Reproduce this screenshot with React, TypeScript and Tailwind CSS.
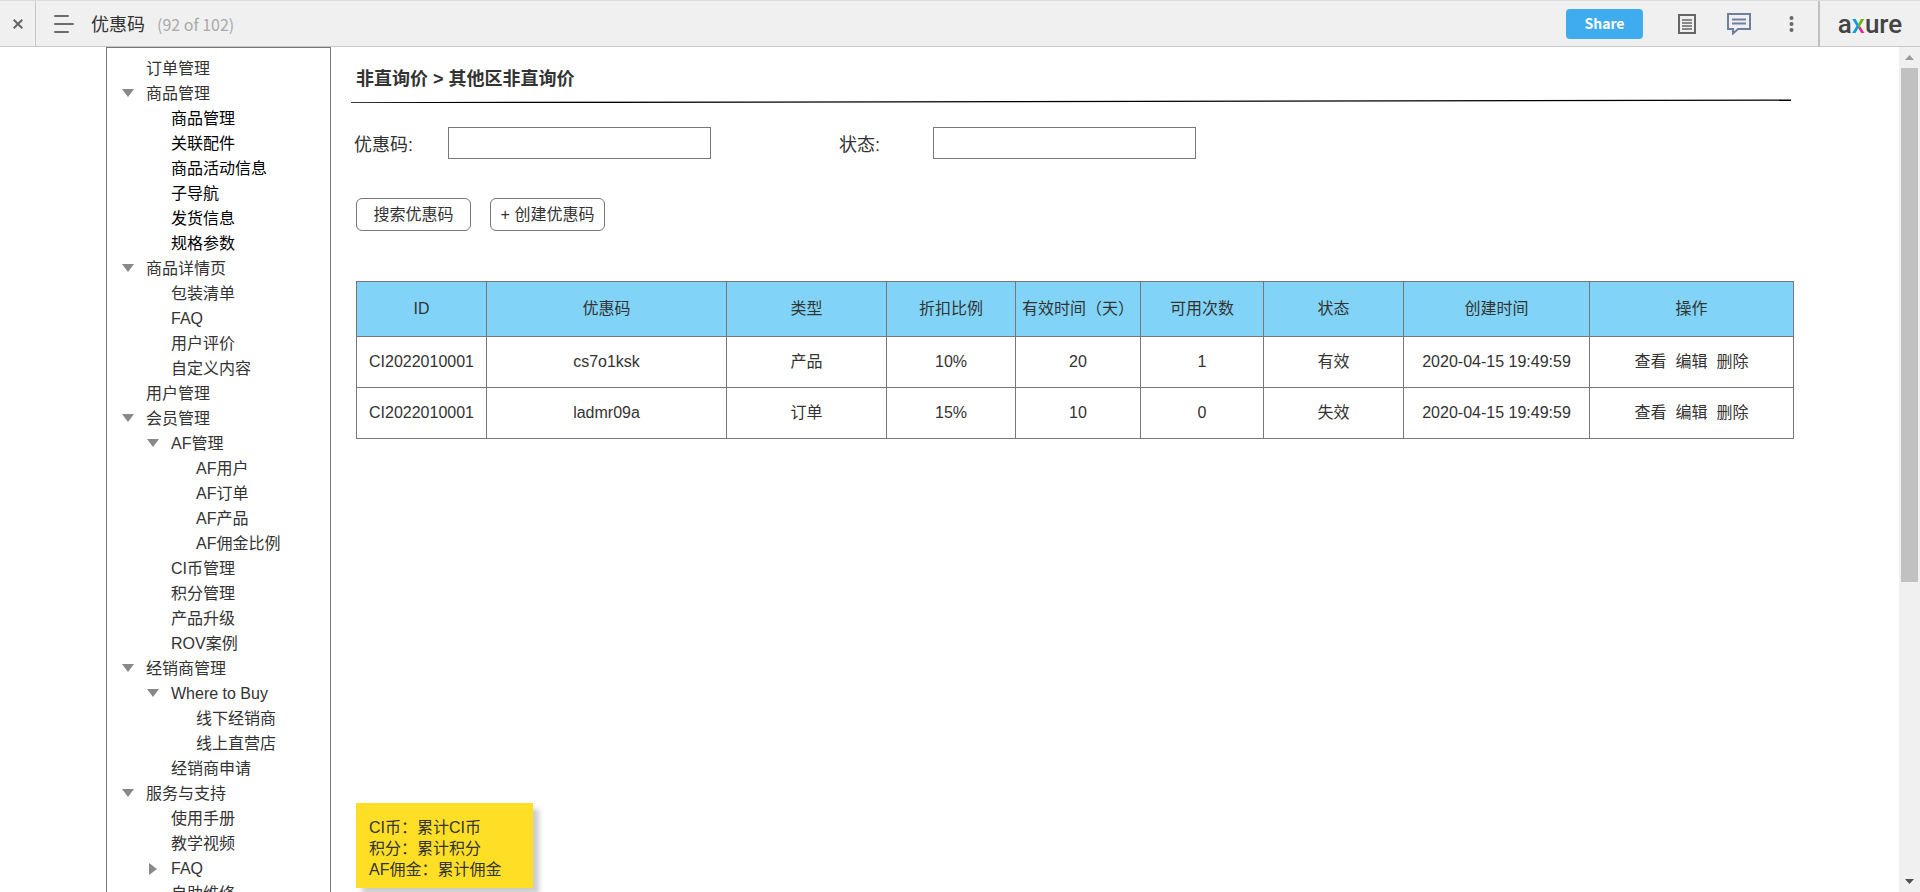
import { useState } from "react";

type MenuItem = {
  label: string;
  level: 0 | 1 | 2;
  arrow?: "down" | "right";
  dark?: boolean;
};

const menu: MenuItem[] = [
  { label: "订单管理", level: 0 },
  { label: "商品管理", level: 0, arrow: "down" },
  { label: "商品管理", level: 1, dark: true },
  { label: "关联配件", level: 1, dark: true },
  { label: "商品活动信息", level: 1, dark: true },
  { label: "子导航", level: 1, dark: true },
  { label: "发货信息", level: 1, dark: true },
  { label: "规格参数", level: 1, dark: true },
  { label: "商品详情页", level: 0, arrow: "down" },
  { label: "包装清单", level: 1 },
  { label: "FAQ", level: 1 },
  { label: "用户评价", level: 1 },
  { label: "自定义内容", level: 1 },
  { label: "用户管理", level: 0 },
  { label: "会员管理", level: 0, arrow: "down" },
  { label: "AF管理", level: 1, arrow: "down" },
  { label: "AF用户", level: 2 },
  { label: "AF订单", level: 2 },
  { label: "AF产品", level: 2 },
  { label: "AF佣金比例", level: 2 },
  { label: "CI币管理", level: 1 },
  { label: "积分管理", level: 1 },
  { label: "产品升级", level: 1 },
  { label: "ROV案例", level: 1 },
  { label: "经销商管理", level: 0, arrow: "down" },
  { label: "Where to Buy", level: 1, arrow: "down" },
  { label: "线下经销商", level: 2 },
  { label: "线上直营店", level: 2 },
  { label: "经销商申请", level: 1 },
  { label: "服务与支持", level: 0, arrow: "down" },
  { label: "使用手册", level: 1 },
  { label: "教学视频", level: 1 },
  { label: "FAQ", level: 1, arrow: "right" },
  { label: "自助维修", level: 1 },
];

const indent = ["pl-[15px]", "pl-10", "pl-[65px]"];

const columns = [
  { title: "ID", width: "w-[130px]" },
  { title: "优惠码", width: "w-[240px]" },
  { title: "类型", width: "w-[160px]" },
  { title: "折扣比例", width: "w-[129px]" },
  { title: "有效时间（天）", width: "w-[125px]" },
  { title: "可用次数", width: "w-[123px]" },
  { title: "状态", width: "w-[140px]" },
  { title: "创建时间", width: "w-[186px]" },
  { title: "操作", width: "w-[204px]" },
];

const rows = [
  ["CI2022010001", "cs7o1ksk", "产品", "10%", "20", "1", "有效", "2020-04-15 19:49:59"],
  ["CI2022010001", "ladmr09a", "订单", "15%", "10", "0", "失效", "2020-04-15 19:49:59"],
];

function Header() {
  return (
    <header className="flex h-[47px] shrink-0 items-stretch border-t border-b border-t-[#dcdcdc] border-b-[#c8c8c8] bg-[#f0f0f0] font-['Noto_Sans_CJK_SC',sans-serif]">
      <button aria-label="Close" className="flex w-9 items-center justify-center border-r border-[#c8c8c8]">
        <svg className="h-[10px] w-[10px]" viewBox="0 0 10 10" stroke="#666" strokeWidth={2}>
          <path d="M0.7 0.7L9.3 9.3M9.3 0.7L0.7 9.3" />
        </svg>
      </button>
      <button aria-label="Pages" className="flex items-center pl-[18px]">
        <svg className="h-5 w-5" viewBox="0 0 20 20" stroke="#6b6b6b" strokeWidth={2} strokeLinecap="round">
          <path d="M1 2h13M1 10h18M1 18h13" />
        </svg>
      </button>
      <div className="flex items-center pl-[17px]">
        <h1 className="text-[18px] text-[#333]">优惠码</h1>
        <span className="pl-3 text-[16px] text-[#a9a9a9]">(92 of 102)</span>
      </div>

      <div className="ml-auto flex items-center">
        <button className="h-[30px] w-[77px] rounded bg-[#3eacef] text-[14px] font-bold text-white">Share</button>
        <button aria-label="Notes" className="ml-[35px]">
          <svg className="h-5 w-[18px]" viewBox="0 0 18 20" fill="none" stroke="#666" strokeWidth={2}>
            <path d="M1 1h16v18H1z" />
            <path d="M4 6h10M4 9h10M4 12h10M4 15h10" strokeWidth={1.6} />
          </svg>
        </button>
        <button aria-label="Comments" className="ml-[31px]">
          <svg className="h-[22px] w-6" viewBox="0 0 24 22" fill="none" stroke="#6f7f9f" strokeWidth={2}>
            <path d="M1 1h22v15H11l-5 4.500V16H1z" />
            <path d="M5 6.500h14M5 10.500h14" />
          </svg>
        </button>
        <button aria-label="More" className="ml-[38px]">
          <svg className="h-4 w-[5px]" viewBox="0 0 5 16" fill="#666">
            <circle cx="2.500" cy="2" r="2" />
            <circle cx="2.500" cy="8" r="2" />
            <circle cx="2.500" cy="14" r="2" />
          </svg>
        </button>
        <div className="ml-6 flex h-full w-[102px] items-center justify-center border-l-2 border-[#c0c0c0]">
          <a href="#axure" className="font-[Roboto,sans-serif] text-[26px] leading-none font-medium text-[#444]">
            a
            <span className="bg-[conic-gradient(from_0deg_at_50%_60%,#6cb518_0_25%,#ee2a8c_25%_50%,#0a9be0_50%)] bg-clip-text text-transparent">
              x
            </span>
            ure
          </a>
        </div>
      </div>
    </header>
  );
}

function Sidebar() {
  return (
    <nav className="w-[225px] shrink-0 border border-[#777] pt-2">
      <ul>
        {menu.map((item, i) => (
          <li key={i} className={`flex h-[25px] items-center ${indent[item.level]}`}>
            <span className="flex w-6 shrink-0">
              {item.arrow && (
                <svg className="h-3 w-3" viewBox="0 0 12 12" fill="#888">
                  <path d={item.arrow === "down" ? "M0 1h12L6 9z" : "M2 0v12L10 6z"} />
                </svg>
              )}
            </span>
            <a href="#page" className={item.dark ? "text-black" : "text-[#333]"}>
              {item.label}
            </a>
          </li>
        ))}
      </ul>
    </nav>
  );
}

function Scrollbar() {
  return (
    <div className="flex w-[21px] shrink-0 flex-col bg-[#f0f0f0]">
      <div className="flex h-[21px] items-center justify-center">
        <svg className="h-[5px] w-[9px]" viewBox="0 0 9 5" fill="#999">
          <path d="M0 5L4.500 0L9 5z" />
        </svg>
      </div>
      <div className="flex-1 px-[2px]">
        <div className="h-[64%] bg-[#c1c1c1]" />
      </div>
      <div className="flex h-[21px] items-center justify-center">
        <svg className="h-[5px] w-[9px]" viewBox="0 0 9 5" fill="#505050">
          <path d="M0 0h9L4.500 5z" />
        </svg>
      </div>
    </div>
  );
}

export default function App() {
  const [code, setCode] = useState("");
  const [status, setStatus] = useState("");

  return (
    <div className="flex h-screen flex-col overflow-hidden bg-white font-['Liberation_Sans','Noto_Sans_CJK_SC',sans-serif] text-[16px] text-[#333]">
      <Header />
      <div className="flex min-h-0 flex-1">
        <div className="flex flex-1 items-start overflow-hidden px-[106px]">
          <Sidebar />

          <main className="flex-1 pl-5">
            <h2 className="mt-5 pl-[5px] text-[18px] leading-6 font-bold">非直询价 &gt; 其他区非直询价</h2>
            <svg className="mt-2 block h-1 w-full" viewBox="0 0 1442 4" preserveAspectRatio="none">
              <path d="M0 3.800L1439 1.200" stroke="#000" strokeWidth={1.3} />
            </svg>

            {/* Filters */}
            <div className="mt-6 flex items-center pl-[3px]">
              <label htmlFor="code" className="w-[94px] pt-1 text-[18px]">
                优惠码:
              </label>
              <input
                id="code"
                value={code}
                onChange={(e) => setCode(e.target.value)}
                className="h-8 w-[263px] border border-[#777] px-2 outline-none"
              />
              <label htmlFor="status" className="ml-32 w-[94px] pt-1 text-[18px]">
                状态:
              </label>
              <input
                id="status"
                value={status}
                onChange={(e) => setStatus(e.target.value)}
                className="h-8 w-[263px] border border-[#777] px-2 outline-none"
              />
            </div>

            <div className="mt-[39px] flex gap-[19px] pl-[5px]">
              <button className="h-[33px] w-[115px] rounded-md border border-[#777]">搜索优惠码</button>
              <button className="h-[33px] w-[115px] rounded-md border border-[#777]">+ 创建优惠码</button>
            </div>

            {/* Coupon list */}
            <div className="mt-[50px] pl-[5px]">
              <table className="w-full table-fixed border-collapse text-center">
                <thead>
                  <tr className="h-[55px] bg-[#81d3f8]">
                    {columns.map((col) => (
                      <th key={col.title} className={`${col.width} border border-[#777] font-normal whitespace-nowrap`}>
                        {col.title}
                      </th>
                    ))}
                  </tr>
                </thead>
                <tbody>
                  {rows.map((row, i) => (
                    <tr key={i} className="h-[51px]">
                      {row.map((cell, j) => (
                        <td key={j} className="border border-[#777]">
                          {cell}
                        </td>
                      ))}
                      <td className="border border-[#777]">
                        <div className="flex justify-center gap-[9px]">
                          <a href="#view">查看</a>
                          <a href="#edit">编辑</a>
                          <a href="#delete">删除</a>
                        </div>
                      </td>
                    </tr>
                  ))}
                </tbody>
              </table>
            </div>

            {/* Sticky note */}
            <div className="mt-[364px] ml-[5px] h-[85px] w-[177px] bg-[#ffdf25] px-[13px] py-[14px] leading-[21px] shadow-[6px_6px_5px_rgba(0,0,0,0.2)]">
              <p>CI币：累计CI币</p>
              <p>积分：累计积分</p>
              <p>AF佣金：累计佣金</p>
            </div>
          </main>
        </div>
        <Scrollbar />
      </div>
    </div>
  );
}
